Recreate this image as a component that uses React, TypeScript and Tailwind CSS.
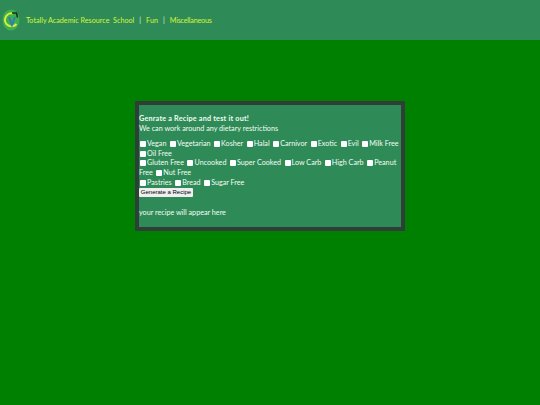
const rows = [
  ["Vegan", "Vegetarian", "Kosher", "Halal", "Carnivor", "Exotic", "Evil", "Milk Free"],
  ["Oil Free"],
  ["Gluten Free", "Uncooked", "Super Cooked", "Low Carb", "High Carb", "Peanut"],
];

function Option({ label }: { label: string }) {
  return (
    <label className="inline-flex items-center gap-[1px]">
      <input type="checkbox" className="appearance-none w-[6px] h-[6px] bg-white rounded-[1px]" />
      <span>{label}</span>
    </label>
  );
}

function Logo() {
  return (
    <svg width="18" height="22" viewBox="0 0 18 22" className="shrink-0">
      <ellipse cx="9" cy="11" rx="8.5" ry="10.5" fill="#3fae4e" />
      <path d="M11 4.5A6.5 6.5 0 1 0 14.5 15" fill="none" stroke="#d8ee3a" strokeWidth="2" />
      <path d="M7 8l3 8 3-8" fill="none" stroke="#2f7fb0" strokeWidth="2" />
      <path d="M10 4h4.5l1 4.5" fill="none" stroke="#14301f" strokeWidth="1.5" />
    </svg>
  );
}

export default function App() {
  return (
    <div className="min-h-[405px] flex flex-col bg-[#008000] font-['Lato','Noto_Sans',sans-serif] text-[7.2px] leading-[10px] text-[#f4fbf4]">
      {/* Header */}
      <header className="h-[40px] flex items-center bg-[#2e8b57] pl-[2px] pr-2 gap-[6px] text-[#d4f53a]">
        <Logo />
        <nav className="flex items-center whitespace-pre pt-[1px]">
          <span>Totally Academic Resource  School</span>
          <span className="mx-[5px] text-[#e0ecc8]">|</span>
          <span>Fun</span>
          <span className="mx-[5px] text-[#e0ecc8]">|</span>
          <span className="tracking-[-0.2px]">Miscellaneous</span>
        </nav>
      </header>

      {/* Recipe panel */}
      <main className="flex justify-center pt-[61px]">
        <section className="w-[270px] h-[130px] border-[4px] border-[#2f3f38] bg-[#2e8b57] pt-[9px] whitespace-nowrap">
          <p className="font-bold tracking-[0.22px]">Genrate a Recipe and test it out!</p>
          <p>We can work around any dietary restrictions</p>
          <div className="mt-[5px]">
            {rows.map((row, i) => (
              <div key={i} className="flex gap-[3.5px] h-[9.75px] items-center pl-[1px]">
                {row.map((label) => (
                  <Option key={label} label={label} />
                ))}
              </div>
            ))}
            <div className="flex gap-[3.5px] h-[9.75px] items-center">
              <span>Free</span>
              <Option label="Nut Free" />
            </div>
            <div className="flex gap-[3.5px] h-[9.75px] items-center pl-[1px]">
              <Option label="Pastries" />
              <Option label="Bread" />
              <Option label="Sugar Free" />
            </div>
          </div>
          <button className="block w-[54px] h-[9px] bg-[#efefef] text-black text-[6px] leading-[9px] font-['Liberation_Sans',sans-serif] rounded-[1px]">
            Generate a Recipe
          </button>
          <p className="mt-[11px]">your recipe will appear here</p>
        </section>
      </main>
    </div>
  );
}
